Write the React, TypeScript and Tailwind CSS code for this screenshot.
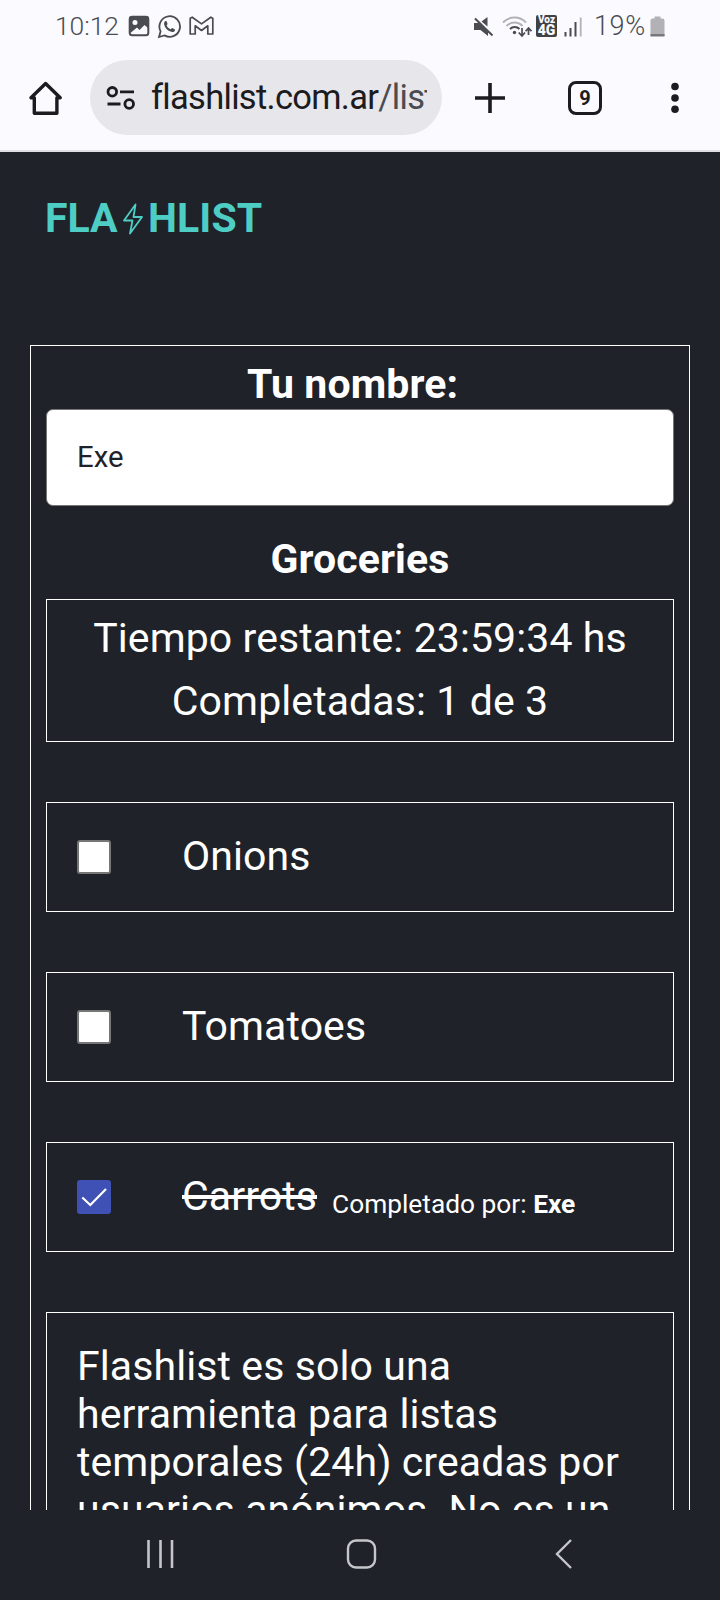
import React from 'react';

function StatusBar() {
  return (
    <div className="flex h-[52px] items-center pl-[55px] text-[#4b4c51]">
      <span className="w-[73px] text-[26.5px] leading-[52px] font-light tracking-[-0.1px]">10:12</span>
      <svg className="mr-[7px] shrink-0" width="22" height="22" viewBox="0 0 22 22">
        <rect x="1.7" y="1.7" width="18.6" height="18.6" rx="2.5" fill="none" stroke="currentColor" strokeWidth="2" />
        <path d="M1.500 1.500h19V13.500l-4-3.500-5 5-2.500-2.500-6 5H1.500z" fill="currentColor" />
        <circle cx="7" cy="7.500" r="2.500" fill="#fafaff" />
      </svg>
      <svg className="mr-[7px] shrink-0" width="25" height="25" viewBox="0 0 25 25">
        <path d="M2 23l1.600-5.700A10.300 10.300 0 1 1 7.500 21.400z" fill="none" stroke="currentColor" strokeWidth="1.800" />
        <path d="M8.700 7c-1 .2-1.800 1.500-1.600 3 .5 4 4 7.300 8 8 1.500.2 2.800-.7 3-2 0-.7-.3-.9-2.900-2.100-.6-.2-.9.900-1.600 1.300-1.800-.6-3.400-2.100-4-3.900.5-.5 1.100-1 .9-1.500L9.600 7.300z" fill="currentColor" />
      </svg>
      <svg className="shrink-0" width="25" height="20" viewBox="0 0 25 20">
        <path d="M1.200 18V2.200l2-1 9.300 6.700 9.300-6.700 2 1V18h-5V9.800l-6.300 4.700-6.300-4.700V18z" fill="none" stroke="currentColor" strokeWidth="1.700" strokeLinejoin="round" />
      </svg>
      <div className="ml-[259px] flex items-center">
        <svg className="mr-[8px] shrink-0" width="21" height="21" viewBox="0 0 21 21">
          <path d="M1 7h5l9 9v4L7.500 14H1z" fill="currentColor" />
          <path d="M8.500 5.500L14.500 1v9.500z" fill="currentColor" />
          <path d="M2 2.500l17.500 17" stroke="currentColor" strokeWidth="2" />
        </svg>
        <svg className="mr-[4px] shrink-0" width="30" height="23" viewBox="0 0 30 23">
          <path d="M1 7.500a16 16 0 0 1 23 0M4.500 11a11 11 0 0 1 16 0" fill="none" stroke="#b1b1b6" strokeWidth="2" />
          <path d="M8 14a6.500 6.500 0 0 1 9.500 0" fill="none" stroke="currentColor" strokeWidth="2" />
          <circle cx="12.500" cy="17.500" r="1.700" fill="currentColor" />
          <path d="M20 13v7M16.700 17.500l3.300 3.500 3-3.500M26.500 20v-6M23.600 16.200l2.900-3.200 2.900 3.200" fill="none" stroke="currentColor" strokeWidth="1.700" />
        </svg>
        <div className="mr-[7px] flex h-[22px] w-[21px] flex-col items-center rounded-[2px] bg-[#414247] text-[#fafaff]">
          <span className="h-[9px] text-[10px] leading-[10px] font-black">Voz</span>
          <span className="text-[14px] leading-[13px] font-black">4G</span>
        </div>
        <svg className="mr-[11px] shrink-0" width="19" height="21" viewBox="0 0 19 21">
          <path d="M1.500 16v4.500M6.500 12v8.500M11.500 6v14.500" stroke="currentColor" strokeWidth="2" />
          <path d="M16.700 1.500v19" stroke="#b1b1b6" strokeWidth="1.800" />
        </svg>
        <span className="w-[56px] text-[27px] leading-[52px] font-light tracking-[0.6px]">19%</span>
        <svg className="shrink-0" width="15" height="21" viewBox="0 0 15 21">
          <path d="M2.500 2.500h2V.5h6v2h2a2 2 0 0 1 2 2V20H.500V4.500a2 2 0 0 1 2-2z" fill="#b1b1b6" />
          <path d="M.5 18h14v2.500H.5z" fill="#77787d" />
        </svg>
      </div>
    </div>
  );
}

function Toolbar() {
  return (
    <div className="flex h-[91px] items-center text-[#1b1b20]">
      <svg className="ml-[28px] shrink-0" width="36" height="38" viewBox="0 0 36 38">
        <path d="M17.600 4.500L3 18.800h3.300v15.400h22.600V18.800h3.300z" fill="none" stroke="currentColor" strokeWidth="3.400" strokeLinejoin="round" />
      </svg>
      <div className="ml-[26px] flex h-[75px] w-[352px] items-center rounded-full bg-[#e6e6eb] pl-[16px]">
        <svg className="shrink-0" width="30" height="26" viewBox="0 0 30 26">
          <g fill="none" stroke="currentColor" strokeWidth="2.800">
            <circle cx="6.300" cy="6.800" r="4.300" />
            <path d="M14 6.800h14M1.500 19h13" />
            <circle cx="23.200" cy="19" r="4.300" />
          </g>
        </svg>
        <div className="ml-[15px] w-[276px] overflow-hidden pb-[2px] text-[34.5px] leading-[48px] tracking-[-0.7px] whitespace-nowrap">
          flashlist.com.ar<span className="text-[#4b4c51]">/list</span>
        </div>
      </div>
      <svg className="ml-[33px] shrink-0" width="30" height="30" viewBox="0 0 30 30">
        <path d="M15 0v30M0 15h30" stroke="currentColor" strokeWidth="3.600" />
      </svg>
      <div className="ml-[63px] flex h-[34px] w-[34px] items-center justify-center rounded-[8px] border-[3px] border-[#1b1b20] text-[20px] leading-none font-bold">
        9
      </div>
      <svg className="ml-[67px] shrink-0" width="12" height="34" viewBox="0 0 12 34">
        <g fill="currentColor">
          <circle cx="6" cy="5.500" r="3.800" />
          <circle cx="6" cy="17" r="3.800" />
          <circle cx="6" cy="28.300" r="3.800" />
        </g>
      </svg>
    </div>
  );
}

function Checkbox({ checked }: { checked?: boolean }) {
  if (checked) {
    return (
      <svg className="shrink-0" width="34" height="34" viewBox="0 0 34 34">
        <rect width="34" height="34" rx="3" fill="#3f51b5" />
        <path d="M5.300 17.500l8 7.500L29 9" fill="none" stroke="#fff" strokeWidth="2.200" />
      </svg>
    );
  }
  return <span className="h-[34px] w-[34px] shrink-0 rounded-[3px] border-[2.500px] border-[#767676] bg-white" />;
}

function Item({ name, by }: { name: string; by?: string }) {
  return (
    <div className="mt-[60px] flex h-[110px] items-center border border-white pl-[30px]">
      <Checkbox checked={!!by} />
      <div className="mb-[2px] ml-[71px] flex h-[48px] items-baseline">
        <span className={by ? 'text-[41px] leading-[48px] tracking-[0.1px] line-through' : 'text-[41px] leading-[48px] tracking-[0.1px]'}>{name}</span>
        {by && (
          <span className="relative top-[3px] ml-[15px] text-[26.3px]">
            Completado por: <b className="font-bold">{by}</b>
          </span>
        )}
      </div>
    </div>
  );
}

export default function App() {
  return (
    <div className="flex h-[1600px] w-[720px] flex-col overflow-hidden bg-[#1f2229] font-['Roboto',sans-serif] text-white">
      <header className="h-[152px] shrink-0 border-b-2 border-[#dedee3] bg-[#fafaff]">
        <StatusBar />
        <Toolbar />
      </header>
      <main className="min-h-0 flex-1 overflow-hidden">
        <div className="flex h-[193px] items-start pt-[42px] pl-[45px] text-[41px] leading-[49px] font-bold text-[#4ecdc4]">
          <span className="w-[75px]">FLA</span>
          <svg className="mt-[8px] w-[28px] shrink-0" height="34" viewBox="0 0 28 34">
            <path d="M15.500 2.500L4 18.500h8.500L10 31.500 22 15h-8.500z" fill="none" stroke="currentColor" strokeWidth="1.800" strokeLinejoin="round" />
          </svg>
          <span className="tracking-[0.1px]">HLIST</span>
        </div>
        <div className="mx-[30px] h-[1400px] border border-white px-[15px] pt-[14px]">
          <h2 className="h-[49px] pr-[15px] text-center text-[41px] leading-[48px] font-bold tracking-[0.1px]">Tu nombre:</h2>
          <div className="flex h-[97px] items-center rounded-[7px] border border-[#767676] bg-white pl-[30px] text-[29.3px] text-[#1f2229]">Exe</div>
          <h2 className="mt-[29px] h-[64px] text-center text-[41px] leading-[48px] font-bold tracking-[0.1px]">Groceries</h2>
          <div className="flex h-[143px] flex-col items-center gap-px border border-white pt-[7px] text-[41px] leading-[62px] tracking-[0.1px]">
            <p>Tiempo restante: 23:59:34 hs</p>
            <p>Completadas: 1 de 3</p>
          </div>
          <Item name="Onions" />
          <Item name="Tomatoes" />
          <Item name="Carrots" by="Exe" />
          <p className="mt-[60px] h-[400px] border border-white px-[30px] pt-[29px] text-[41px] leading-[48px] tracking-[0.1px] whitespace-nowrap">
            Flashlist es solo una<br />
            herramienta para listas<br />
            temporales (24h) creadas por<br />
            usuarios anónimos. No es un
          </p>
        </div>
      </main>
      <nav className="flex h-[90px] shrink-0 items-start pt-[28px] pl-[146px] text-[#c5c6c9]">
        <svg width="30" height="32" viewBox="0 0 30 32">
          <path d="M2.500 2v28M14.500 2v28M26 2v28" stroke="currentColor" strokeWidth="2.600" />
        </svg>
        <svg className="ml-[169px]" width="32" height="32" viewBox="0 0 32 32">
          <rect x="3" y="2.500" width="27" height="27" rx="8" fill="none" stroke="currentColor" strokeWidth="2.400" />
        </svg>
        <svg className="ml-[177px]" width="20" height="32" viewBox="0 0 20 32">
          <path d="M17 2L3 16l14 14" fill="none" stroke="currentColor" strokeWidth="2.400" />
        </svg>
      </nav>
    </div>
  );
}
